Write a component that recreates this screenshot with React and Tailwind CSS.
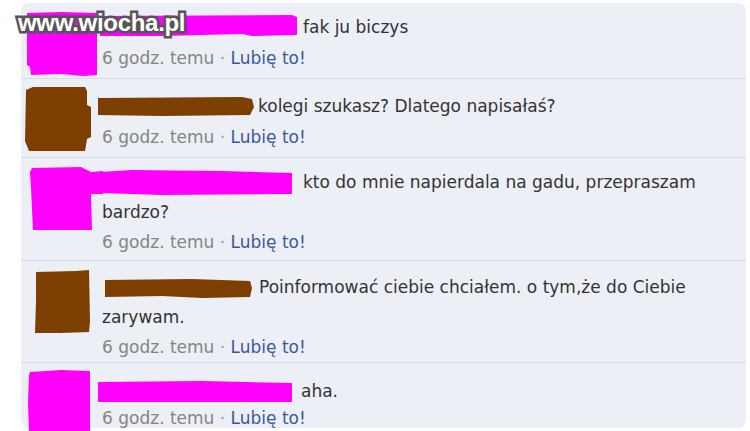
import React from 'react';

const PINK = '#ff00ff';
const BROWN = '#7c3f00';

const comments = [
  {
    h: 'h-[76px]',
    pt: 'pt-[9px]',
    metaMt: 'mt-[1px]',
    avatar: { color: PINK, pts: '6,10 40,9 76,10 76,72 62,73 40,71 10,72 9,64 6,62' },
    name: { color: PINK, w: 201, pts: '-2,4 190,3 195,5 195,23 150,24 140,22 60,24 -2,24' },
    lines: ['fak ju biczys'],
  },
  {
    h: 'h-[79px]',
    pt: 'pt-[12px]',
    metaMt: 'mt-[1px]',
    avatar: { color: BROWN, pts: '5,11 12,8 64,8 66,12 66,26 70,28 70,58 66,60 64,72 8,72 4,62' },
    name: { color: BROWN, w: 156, pts: '-4,7 140,6 150,8 152,16 148,24 60,25 -4,24' },
    lines: ['kolegi szukasz? Dlatego napisałaś?'],
  },
  {
    h: 'h-[103px]',
    pt: 'pt-[9px]',
    metaMt: 'mt-0',
    avatar: { color: PINK, pts: '11,10 60,9 70,14 82,13 82,36 70,36 71,72 12,72 10,30 9,14' },
    name: { color: PINK, w: 201, pts: '-2,5 30,3 120,4 190,6 190,27 60,28 -2,26' },
    lines: ['kto do mnie napierdala na gadu, przepraszam', 'bardzo?'],
  },
  {
    h: 'h-[102px]',
    pt: 'pt-[11px]',
    metaMt: 'mt-0',
    avatar: { color: BROWN, pts: '15,11 55,10 68,9 69,60 68,71 40,72 14,72 15,40' },
    name: { color: BROWN, w: 157, pts: '3,8 90,7 148,9 150,16 148,25 100,26 60,24 3,25' },
    lines: ['Poinformować ciebie chciałem. o tym,że do Ciebie', 'zarywam.'],
  },
  {
    h: 'h-[65px]',
    pt: 'pt-[13px]',
    metaMt: 'mt-[-3px]',
    avatar: { color: PINK, pts: '9,9 40,7 69,8 69,70 8,70 7,40 8,12' },
    name: { color: PINK, w: 199, pts: '-4,6 100,5 190,7 190,26 -4,26' },
    lines: ['aha.'],
    last: true,
  },
];

function Comment({ c }) {
  return (
    <div className={`flex ${c.h} ${c.last ? '' : 'border-b border-[#d6dbe6]'}`}>
      <div className="w-[81px] shrink-0">
        <svg width="81" height="72" className="block overflow-visible">
          <polygon points={c.avatar.pts} fill={c.avatar.color} />
        </svg>
      </div>
      <div className={`${c.pt} text-[17px] leading-[30px] text-[#333333]`}>
        <div>
          <svg
            width={c.name.w}
            height="30"
            className="inline-block align-top overflow-visible"
          >
            <polygon points={c.name.pts} fill={c.name.color} />
          </svg>
          {c.lines[0]}
          {c.lines[1] && (
            <>
              <br />
              {c.lines[1]}
            </>
          )}
        </div>
        <div className={`${c.metaMt} text-[#858585]`}>
          6 godz. temu <span className="text-[#999999]">·</span>{' '}
          <span className="text-[#3b5998]">Lubię to!</span>
        </div>
      </div>
    </div>
  );
}

export default function App() {
  return (
    <div className="relative min-h-screen bg-white pt-[3px] pl-[21px] font-['DejaVu_Sans',sans-serif]">
      <div className="w-[725px] h-[425px] bg-[#eceff5] rounded-[8px]">
        {comments.map((c, i) => (
          <Comment key={i} c={c} />
        ))}
      </div>
      {/* watermark */}
      <div className="absolute left-[18px] top-[8px] text-[24px] font-bold leading-[30px] tracking-[-0.3px] text-white font-['Liberation_Sans',sans-serif] [-webkit-text-stroke:5px_#555555] [paint-order:stroke_fill]">
        www.wiocha.pl
      </div>
    </div>
  );
}
